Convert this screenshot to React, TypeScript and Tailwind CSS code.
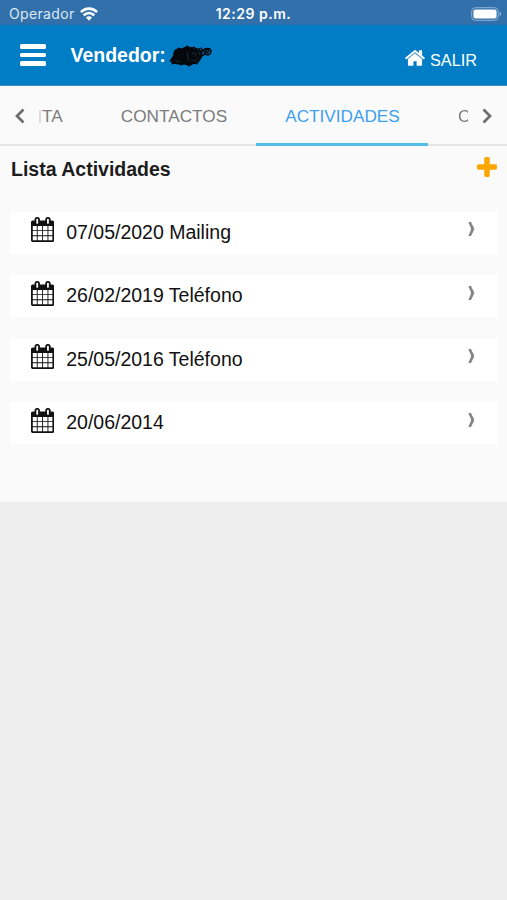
import React from "react";

type IconProps = { className?: string };

function CalendarIcon({ className }: IconProps) {
  return (
    <svg viewBox="64 0 1664 1792" className={className} fill="currentColor">
      <path d="M192 1664h288v-288h-288v288zm352 0h320v-288h-320v288zm-352-352h288v-320h-288v320zm352 0h320v-320h-320v320zm-352-384h288v-288h-288v288zm736 736h320v-288h-320v288zm-384-736h320v-288h-320v288zm768 736h288v-288h-288v288zm-384-352h320v-320h-320v320zm-352-864v-288q0-13-9.5-22.5t-22.5-9.5h-64q-13 0-22.5 9.5t-9.5 22.5v288q0 13 9.5 22.5t22.5 9.5h64q13 0 22.5-9.5t9.5-22.5zm736 864h288v-320h-288v320zm-384-384h320v-288h-320v288zm384 0h288v-288h-288v288zm32-480v-288q0-13-9.5-22.5t-22.5-9.5h-64q-13 0-22.5 9.5t-9.5 22.5v288q0 13 9.5 22.5t22.5 9.5h64q13 0 22.5-9.5t9.5-22.5zm384-64v1280q0 52-38 90t-90 38h-1408q-52 0-90-38t-38-90v-1280q0-52 38-90t90-38h128v-96q0-66 47-113t113-47h64q66 0 113 47t47 113v96h384v-96q0-66 47-113t113-47h64q66 0 113 47t47 113v96h128q52 0 90 38t38 90z" />
    </svg>
  );
}

function HomeIcon({ className }: IconProps) {
  return (
    <svg viewBox="0 0 1792 1792" className={className} fill="currentColor">
      <path d="M1472 992v480q0 26-19 45t-45 19h-384v-384h-256v384h-384q-26 0-45-19t-19-45v-480q0-1 .5-3t.5-3l575-474 575 474q1 2 1 6zm223-69l-62 74q-8 9-21 11h-3q-13 0-21-7l-692-577-692 577q-12 8-24 7-13-2-21-11l-62-74q-8-10-7-23.5t11-21.5l719-599q32-26 76-26t76 26l244 204v-195q0-14 9-23t23-9h192q14 0 23 9t9 23v408l219 182q10 8 11 21.5t-7 23.5z" />
    </svg>
  );
}

function PlusIcon({ className }: IconProps) {
  return (
    <svg viewBox="192 128 1408 1408" className={className} fill="currentColor">
      <path d="M1600 736v192q0 40-28 68t-68 28h-416v416q0 40-28 68t-68 28h-192q-40 0-68-28t-28-68v-416h-416q-40 0-68-28t-28-68v-192q0-40 28-68t68-28h416v-416q0-40 28-68t68-28h192q40 0 68 28t28 68v416h416q40 0 68 28t28 68z" />
    </svg>
  );
}

function WifiIcon({ className }: IconProps) {
  return (
    <svg viewBox="0 0 18 14" className={className} fill="none" stroke="currentColor" strokeWidth="2.6">
      <path d="M0.9 5.1C5.4 0.5 12.6 0.5 17.1 5.1" />
      <path d="M3.7 8.4C6.8 5.3 11.2 5.3 14.3 8.4" />
      <path d="M6 10.6C7.7 8.8 10.3 8.8 12 10.6L9 13.8Z" fill="currentColor" stroke="none" />
    </svg>
  );
}

function BatteryIcon({ className }: IconProps) {
  return (
    <svg viewBox="0 0 31 14" className={className}>
      <rect x="0.7" y="0.7" width="26.6" height="12.6" rx="3.6" fill="none" stroke="#8fb1d4" strokeWidth="1" />
      <rect x="2.4" y="2.4" width="23.2" height="9.2" rx="2" fill="white" />
      <path d="M28.6 4.8C30.6 5.3 30.6 8.7 28.6 9.2Z" fill="#8db0d4" />
    </svg>
  );
}

function Scribble({ className }: IconProps) {
  return (
    <svg viewBox="0 0 44 24" className={className} fill="none" stroke="#05080c" strokeLinecap="round" strokeLinejoin="round">
      <path
        d="M2 17C3 14 5 12 5 9C5 5 9 5 13 5C17 2 22 3 25 5C29 4 32 6 33 9C33 13 32 15 30 17C27 20 23 19 20 21C15 19 9 21 4 19Z"
        fill="#05080c"
        strokeWidth="1"
      />
      <path
        d="M1 17L4 13L3 20L8 18L12 21L16 19L20 22L25 19L28 20L31 15M6 7L10 4L14 6L18 2L21 5L25 3L28 6L32 4L34 8"
        strokeWidth="1.1"
      />
      <path d="M32 8C34 4 39 4 41 5C43 7 42 10 39 11C36 11 35 8 37 6C39 5 41 7 39 8M31 12C34 12 36 10 37 7M33 6L39 9" strokeWidth="1.5" />
      <path d="M18 8C19 11 18 15 20 17M23 10C26 7 29 10 26 12M22 16C24 18 27 17 29 14M7 17L10 18M30 8L31 11" stroke="#1c4052" strokeWidth="0.7" />
    </svg>
  );
}

function Chevron({ className, d }: IconProps & { d: string }) {
  return (
    <svg viewBox="0 0 10 16" className={className} fill="none" stroke="currentColor" strokeWidth="2.7">
      <path d={d} />
    </svg>
  );
}

function RowArrow({ className }: IconProps) {
  return (
    <svg viewBox="0 0 10 16" className={className} fill="currentColor">
      <path d="M2.4 0.9H5.1C5.8 3.6 8.2 6 8.2 8C8.2 10 5.8 12.4 5.1 15.1H2.4C3 12.4 5 10 5 8C5 6 3 3.6 2.4 0.9Z" />
    </svg>
  );
}

const activities = ["07/05/2020 Mailing", "26/02/2019 Teléfono", "25/05/2016 Teléfono", "20/06/2014"];

export default function App() {
  return (
    <div className="h-[900px] w-[507px] overflow-hidden bg-[#eeeeee] font-['Liberation_Sans',Arial,sans-serif]">
      <div className="grid h-[25px] grid-cols-3 items-center bg-[#3170ab] pt-[3px] font-[Inter,sans-serif] text-white">
        <div className="flex items-center gap-[5px] pl-[9px]">
          <span className="text-[14px] leading-5 tracking-[0.35px] text-[#dde8f3]">Operador</span>
          <WifiIcon className="h-[14px] w-[18px]" />
        </div>
        <span className="text-center text-[14px] leading-5 font-semibold tracking-[0.5px]">12:29 p.m.</span>
        <div className="flex justify-end pr-[5px]">
          <BatteryIcon className="h-[14px] w-[31px]" />
        </div>
      </div>

      <header className="flex h-[61px] items-center border-b border-[#3b8fca] bg-[#007dc5] pl-5 text-white">
        <button className="flex w-[26px] flex-col gap-[4px]" aria-label="Menú">
          <span className="h-[4.6px] rounded-[1.5px] bg-white" />
          <span className="h-[4.6px] rounded-[1.5px] bg-white" />
          <span className="h-[4.6px] rounded-[1.5px] bg-white" />
        </button>
        <h1 className="ml-[24.5px] text-[19.5px] leading-6 font-bold">Vendedor:</h1>
        <Scribble className="mt-px ml-[3px] h-[24px] w-[44px]" />
        <div className="mt-[8px] mr-[30px] ml-auto flex items-center gap-[4px]">
          <HomeIcon className="-mt-[3px] h-[22px] w-[22px]" />
          <span className="mt-px text-[16.3px] leading-5">SALIR</span>
        </div>
      </header>

      <nav className="flex h-[60px] border-b-2 border-[#e6e6e6] bg-[#fafafa] text-[17.2px] leading-[60px] text-[#7c7c7c]">
        <div className="flex w-[39px] items-center pt-[2px] pl-[15px]">
          <Chevron className="h-[16px] w-[10px] text-[#6d6d6d]" d="M8.5 1.5L2 8L8.5 14.5" />
        </div>
        <div className="flex w-[53px] items-center pt-[2px]">
          <span className="mr-px h-[13px] w-[2px] bg-[#dddddd]" />
          <span>TA</span>
        </div>
        <div className="w-[164px] text-center">CONTACTOS</div>
        <div className="h-[60px] w-[172px] border-b-[3px] border-[#55bbe9] pl-px text-center text-[#3d9ff0]">ACTIVIDADES</div>
        <div className="ml-[30px] w-[13px] [mask-image:linear-gradient(to_right,black_10px,transparent_10px)]">C</div>
        <div className="ml-[11px] flex items-center pt-[2px]">
          <Chevron className="h-[16px] w-[10px] text-[#6d6d6d]" d="M1.5 1.5L8 8L1.5 14.5" />
        </div>
      </nav>

      <main className="h-[356px] bg-[#fafafa] pl-[10px]">
        <div className="flex h-[65.5px] items-start justify-between pt-[11px] pr-[10px]">
          <h2 className="pl-px text-[19.5px] leading-6 font-bold text-[#1c1c1c]">Lista Actividades</h2>
          <PlusIcon className="h-[20px] w-[20px] text-[#fda500]" />
        </div>
        <ul className="flex w-[488px] flex-col gap-[21.5px]">
          {activities.map((label) => (
            <li key={label} className="flex h-[42px] items-start bg-white pl-[21px] text-[#111111]">
              <CalendarIcon className="mt-[5.5px] h-[25px] w-[23.2px]" />
              <span className="mt-[8px] ml-[12px] text-[19.5px] leading-6">{label}</span>
              <RowArrow className="mt-[9.5px] mr-[22px] ml-auto h-[16px] w-[10px] text-[#858585]" />
            </li>
          ))}
        </ul>
      </main>
    </div>
  );
}
